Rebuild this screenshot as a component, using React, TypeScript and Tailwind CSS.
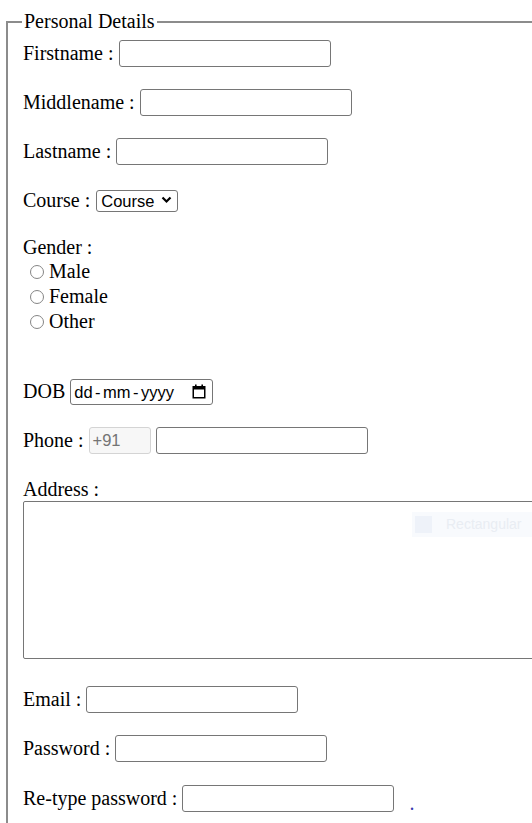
import React from 'react';

const inputCls =
  'h-[27px] w-[212px] border border-[#767676] rounded-[3px] bg-white px-[3px] font-["Liberation_Sans",Arial,sans-serif] text-[16px]';

const Row: React.FC<{ label: string; className?: string; children?: React.ReactNode }> = ({
  label,
  className = '',
  children,
}) => (
  <div className={`flex h-[27px] items-center gap-[5px] ${className}`}>
    <span>{label}</span>
    {children}
  </div>
);

const Radio: React.FC<{ label: string }> = ({ label }) => (
  <label className="flex h-[25px] items-center pl-[7px]">
    <input
      type="radio"
      name="gender"
      className="h-[14px] w-[14px] appearance-none rounded-full border border-[#858585] bg-white"
    />
    <span className="ml-[5px]">{label}</span>
  </label>
);

const App: React.FC = () => {
  return (
    <div className='min-h-[823px] overflow-hidden bg-white font-["Liberation_Serif","Times_New_Roman",serif] text-[20px] leading-[23px] text-black'>
      <fieldset className="ml-[6px] mt-[10px] w-[600px] border-l-2 border-t-2 border-[#8c8c8c] pb-[30px] pl-[15px] pt-[7px]">
        <legend className="-ml-[1px] px-[2px] leading-[23px]">Personal Details</legend>

        <div className="flex flex-col">
          <Row label="Firstname :">
            <input type="text" className={inputCls} />
          </Row>

          <Row label="Middlename :" className="mt-[22px]">
            <input type="text" className={inputCls} />
          </Row>

          <Row label="Lastname :" className="mt-[22px]">
            <input type="text" className={inputCls} />
          </Row>

          <Row label="Course :" className="mt-[22px]">
            <div className="relative ml-[1px]">
              <select className='h-[22px] w-[82px] appearance-none rounded-[3px] border border-[#767676] bg-white pl-[4px] font-["Liberation_Sans",Arial,sans-serif] text-[16.5px] leading-[20px]'>
                <option>Course</option>
              </select>
              <svg
                className="pointer-events-none absolute right-[6px] top-[7px]"
                width="11"
                height="8"
                viewBox="0 0 11 8"
              >
                <path d="M1.5 1.5 L5.5 5.5 L9.5 1.5" stroke="#000" strokeWidth="2.2" fill="none" />
              </svg>
            </div>
          </Row>

          <div className="mt-[22px] h-[23px]">Gender :</div>
          <Radio label="Male" />
          <Radio label="Female" />
          <Radio label="Other" />

          <div className="mt-[44px] flex h-[27px] items-center gap-[5px]">
            <span>DOB</span>
            <div className="flex h-[26px] w-[143px] items-center justify-between rounded-[3px] border border-[#767676] bg-white pl-[3px] pr-[6px] font-['Liberation_Sans',Arial,sans-serif] text-[16.5px] leading-[20px]">
              <span>
                dd<span className="px-[2.5px]">-</span>mm<span className="px-[2.5px]">-</span>yyyy
              </span>
              <svg width="14" height="15" viewBox="0 0 14 15">
                <rect x="1.25" y="2.75" width="11.5" height="11" fill="none" stroke="#000" strokeWidth="1.5" />
                <rect x="1" y="2.5" width="12" height="3" fill="#000" />
                <rect x="3" y="0.5" width="1.6" height="2.5" fill="#000" />
                <rect x="9.4" y="0.5" width="1.6" height="2.5" fill="#000" />
              </svg>
            </div>
          </div>

          <Row label="Phone :" className="mt-[22px]">
            <div className='flex h-[27px] w-[62px] items-center rounded-[3px] border border-[#d4d4d4] bg-[#f7f7f7] pl-[3px] font-["Liberation_Sans",Arial,sans-serif] text-[16.5px] text-[#747474]'>
              +91
            </div>
            <input type="text" className={inputCls} />
          </Row>

          <div className="mt-[24px] h-[23px]">Address :</div>
          <div className="relative">
            <textarea className="block h-[158px] w-[600px] resize-none rounded-[2px] border border-[#767676] bg-white" />
            <div className="pointer-events-none absolute left-[389px] top-[11px] flex h-[25px] w-[160px] items-center bg-[#f8fafd]">
              <div className="ml-[3px] h-[17px] w-[17px] bg-[#eef2f9]" />
              <span className='ml-[14px] font-["Liberation_Sans",Arial,sans-serif] text-[14px] text-[#e9edf3]'>
                Rectangular
              </span>
            </div>
          </div>

          <Row label="Email :" className="mt-[27px]">
            <input type="email" className={inputCls} />
          </Row>

          <Row label="Password :" className="mt-[22px]">
            <input type="password" className={inputCls} />
          </Row>

          <Row label="Re-type password :" className="mt-[23px]">
            <input type="password" className={inputCls} />
            <span className="ml-[10px] mt-[10px] text-[#3d3db0]">.</span>
          </Row>
        </div>
      </fieldset>
    </div>
  );
};

export default App;
